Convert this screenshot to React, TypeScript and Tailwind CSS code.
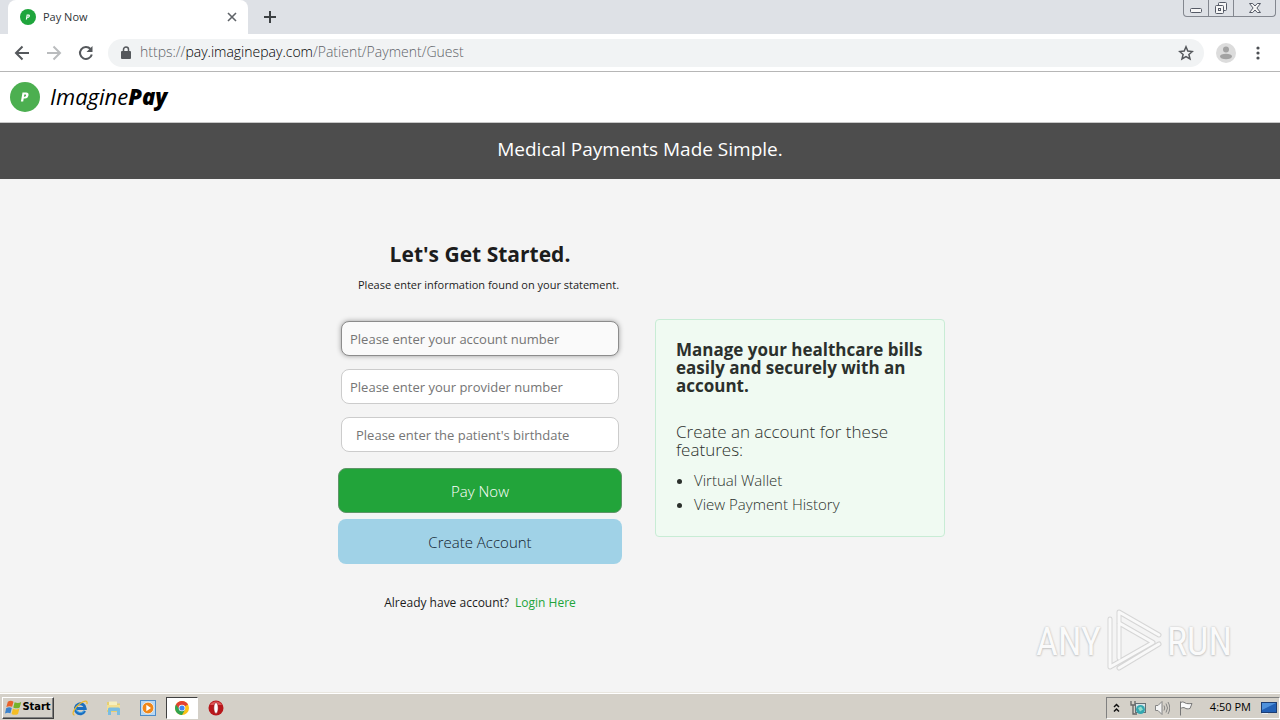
import React from "react";

const UI_FONT = "font-['Open_Sans','Noto_Sans',sans-serif]";

function PayBadge({ size, fill }: { size: number; fill: string }) {
  return (
    <svg width={size} height={size} viewBox="0 0 30 30" aria-hidden="true" className="shrink-0">
      <circle cx="15" cy="15" r="15" fill={fill} />
      <path
        d="M12.500 10.500h3.600c1.900 0 2.700 1.100 2.400 2.700-.3 2-1.600 3.300-3.500 3.300h-1.300l-.5 3h-2.300z M14.300 12.400l-.4 2.300h.7c.9 0 1.300-.5 1.500-1.200.1-.7-.2-1.100-.9-1.100z"
        fill="#fff"
        fillRule="evenodd"
      />
    </svg>
  );
}

function TabStrip() {
  return (
    <div className="flex h-[34px] bg-[#dee1e6] pl-2">
      <div className="flex h-full w-60 items-center rounded-t-lg bg-white pl-3 pr-2">
        <PayBadge size={16} fill="#1fa53c" />
        <span className="ml-[7px] flex-1 text-[11px] text-[#303438]">Pay Now</span>
        <button aria-label="Close tab" className="flex h-4 w-4 items-center justify-center">
          <svg width="10" height="10" viewBox="0 0 10 10" stroke="#5f6368" strokeWidth="1.6">
            <path d="M1 1l8 8M9 1L1 9" />
          </svg>
        </button>
      </div>
      <button aria-label="New tab" className="ml-3.5 flex w-4 items-center justify-center">
        <svg width="12" height="12" viewBox="0 0 12 12" stroke="#3c4043" strokeWidth="2">
          <path d="M6 0v12M0 6h12" />
        </svg>
      </button>
      <div className="ml-auto mr-1 flex h-[17px] rounded-b border border-t-0 border-[#83878f] bg-[#dee1e6]">
        <button aria-label="Minimize" className="flex w-[25px] items-center justify-center border-r border-[#83878f]">
          <svg width="12" height="17" viewBox="0 0 12 17" fill="#f6f6f6" stroke="#555a66">
            <rect x=".5" y="8.5" width="11" height="4" rx="1" />
          </svg>
        </button>
        <button aria-label="Restore" className="flex w-[25px] items-center justify-center border-r border-[#83878f]">
          <svg width="14" height="15" viewBox="0 0 14 15" fill="#f6f6f6" stroke="#555a66">
            <rect x="4.5" y="1.5" width="8" height="8" rx="1" />
            <rect x="1.500" y="4.5" width="8" height="8" rx="1" />
            <rect x="4.500" y="7.500" width="2" height="2" />
          </svg>
        </button>
        <button aria-label="Close" className="flex w-[41px] items-center justify-center">
          <svg width="12" height="12" viewBox="0 0 12 12" fill="#f6f6f6" stroke="#555a66">
            <path d="M.5 1.500h3.200L6 4l2.300-2.500h3.200L7.900 6l3.600 4.500H8.300L6 8l-2.300 2.500H.5L4.100 6z" />
          </svg>
        </button>
      </div>
    </div>
  );
}

function Toolbar() {
  return (
    <div className="flex h-[38px] items-center border-b border-[#b6b6b6] bg-white pl-3.5 pr-3">
      <button aria-label="Back" className="flex w-4 justify-center">
        <svg width="16" height="16" viewBox="0 0 16 16" fill="none" stroke="#55585c" strokeWidth="2">
          <path d="M15 8H2M8.500 1.500L2 8l6.500 6.500" />
        </svg>
      </button>
      <button aria-label="Forward" className="ml-4 flex w-4 justify-center">
        <svg width="16" height="16" viewBox="0 0 16 16" fill="none" stroke="#babcbe" strokeWidth="2">
          <path d="M1 8h13M7.500 1.500L14 8l-6.500 6.500" />
        </svg>
      </button>
      <button aria-label="Reload" className="ml-4 flex w-4 justify-center">
        <svg width="16" height="16" viewBox="0 0 16 16" fill="none" stroke="#55585c" strokeWidth="2">
          <path d="M12.500 4A6 6 0 1 0 13.800 9.500" />
          <path d="M14.500 1v6H8.500z" fill="#55585c" stroke="none" />
        </svg>
      </button>
      <div className="ml-3.5 flex h-7 flex-1 items-center rounded-full bg-[#f1f3f4] px-3">
        <svg width="12" height="14" viewBox="0 0 12 14" className="shrink-0">
          <rect x="1" y="5" width="10" height="8" rx="1" fill="#55585c" />
          <path d="M3.500 5.500V3.500a2.500 2.500 0 0 1 5 0v2" fill="none" stroke="#55585c" strokeWidth="1.500" />
        </svg>
        <div className="ml-2 flex-1 pb-0.5 text-sm leading-5 font-light text-[#5f6368]">
          https://<span className="text-black">pay.imaginepay.com</span>/Patient/Payment/Guest
        </div>
        <button aria-label="Bookmark this page" className="-mr-0.5">
          <svg width="16" height="16" viewBox="0 0 16 16" fill="none" stroke="#55585c" strokeWidth="1.500">
            <path d="M8 1.800l1.800 4.300 4.600.4-3.500 3 1.100 4.500L8 11.600 4 14l1.100-4.500-3.500-3 4.600-.4z" />
          </svg>
        </button>
      </div>
      <button aria-label="Profile" className="ml-3">
        <svg width="20" height="20" viewBox="0 0 20 20">
          <circle cx="10" cy="10" r="10" fill="#dcdcdc" />
          <circle cx="10" cy="6.500" r="3" fill="#a2a2a2" />
          <ellipse cx="10" cy="13.500" rx="6" ry="2.700" fill="#a2a2a2" />
        </svg>
      </button>
      <button aria-label="Browser menu" className="ml-4 mr-1">
        <svg width="12" height="16" viewBox="0 0 12 16" fill="#4d5054">
          <circle cx="6" cy="3" r="1.600" />
          <circle cx="6" cy="8" r="1.600" />
          <circle cx="6" cy="13" r="1.600" />
        </svg>
      </button>
    </div>
  );
}

function SiteHeader() {
  return (
    <header>
      <div className="flex h-[51px] items-center border-b border-[#c8c8c8] bg-white pl-2.5">
        <PayBadge size={30} fill="#4caf50" />
        <a href="#home" className="ml-2.5 pb-0.5 text-[22px] leading-[30px] italic text-black">
          Imagine<span className="font-extrabold">Pay</span>
        </a>
      </div>
      <p className="bg-[#4d4d4d] pt-3 pb-4 text-center text-[19px] leading-7 text-white">
        Medical Payments Made Simple.
      </p>
    </header>
  );
}

const inputBase =
  "block h-[35px] w-full rounded-lg border text-[13px] text-[#333] outline-none placeholder:text-[#757575]";

function GuestForm() {
  return (
    <form className="px-[18px]" onSubmit={(e) => e.preventDefault()}>
      <h1 className="text-center text-[21px] leading-8 font-bold text-[#1c1c1c]">Let's Get Started.</h1>
      <p className="mt-[5px] pl-5 text-[11px] leading-5 whitespace-nowrap text-[#1c1c1c]">
        Please enter information found on your statement.
      </p>
      <div className="mt-[26px] flex flex-col gap-[13px] px-[3px]">
        <input
          aria-label="Account number"
          placeholder="Please enter your account number"
          className={inputBase + " border-[#8c8c8c] bg-[#fafafa] px-2 shadow-[0_0_5px_#999]"}
        />
        <input
          aria-label="Provider number"
          placeholder="Please enter your provider number"
          className={inputBase + " border-[#ccc] bg-white px-2"}
        />
        <input
          aria-label="Patient's birthdate"
          placeholder="Please enter the patient's birthdate"
          className={inputBase + " border-[#ccc] bg-white px-3.5"}
        />
      </div>
      <button className="mt-4 block h-[45px] w-full rounded-lg border border-[#5f9468] bg-[#22a43a] pt-0.5 text-[15px] font-light text-white">
        Pay Now
      </button>
      <button
        type="button"
        className="mt-1.5 block h-[45px] w-full rounded-lg bg-[#a0d2e7] pt-0.5 text-[15px] font-light text-[#10202c]"
      >
        Create Account
      </button>
      <p className="mt-[29px] text-center text-xs leading-5 text-[#1c1c1c]">
        Already have account?
        <a href="#login" className="ml-1.5 text-[#22a43a]">
          Login Here
        </a>
      </p>
    </form>
  );
}

function AccountPanel() {
  return (
    <aside className="mx-[15px] mt-[81px] self-start rounded-sm border border-[#c8ecd5] bg-[#f0faf2] px-5 pt-[21px] pb-5 text-[#2b302c]">
      <h2 className="text-[17px] leading-[18px] font-bold">
        Manage your healthcare bills easily and securely with an account.
      </h2>
      <h3 className="mt-7 text-[17px] leading-[18px] font-light">Create an account for these features:</h3>
      <ul className="mt-[9px] list-disc pl-[18px] text-[15px] leading-6 font-light">
        <li>Virtual Wallet</li>
        <li>View Payment History</li>
      </ul>
    </aside>
  );
}

function Watermark() {
  return (
    <div
      aria-hidden="true"
      className="absolute right-12 bottom-5 flex items-center gap-1 font-['Liberation_Sans_Narrow','Roboto_Condensed','Liberation_Sans',sans-serif] text-[38px] leading-none text-[#fafafa] [text-shadow:0_0_2px_#bbb,0_1px_2px_#ccc]"
    >
      <span className="pt-1">ANY</span>
      <svg width="58" height="64" viewBox="0 0 58 64" fill="none" strokeLinejoin="round" strokeLinecap="round">
        <g stroke="#d6d6d6" strokeWidth="5">
          <path d="M14 50V4l40 23M14 15l34 19.500L5 59V11M14 60l40-24" />
        </g>
        <g stroke="#f9f9f9" strokeWidth="3">
          <path d="M14 50V4l40 23M14 15l34 19.500L5 59V11M14 60l40-24" />
        </g>
      </svg>
      <span className="pt-1">RUN</span>
    </div>
  );
}

function WindowsFlag() {
  return (
    <svg width="17" height="16" viewBox="0 0 15 14">
      <path d="M2.500 1.500C4.500.3 6 .6 7.500 1.400L6.300 6C4.700 5.200 3 5.200 1.200 6.200z" fill="#e8622c" />
      <path d="M8.500 1.900c2 1 3.800.9 5.800-.1L13 6.500c-2 1-3.800 1-5.700 0z" fill="#74b32c" />
      <path d="M1 7.200c1.800-1 3.500-1 5-.2l-1.200 4.700c-1.600-.9-3.200-.8-4.800.2z" fill="#3b82cd" />
      <path d="M7 7.500c1.900 1 3.700 1 5.700 0l-1.200 4.700c-2 1-3.800 1-5.700 0z" fill="#f5bd24" />
    </svg>
  );
}

function Taskbar() {
  const slot = "flex h-[22px] w-8 items-center justify-center";
  return (
    <footer className="flex h-7 items-center border-t border-[#e9e6df] bg-[#d4d0c8] pt-0.5 pl-0.5 shadow-[inset_0_1px_0_#fff]">
      <button className="flex h-[22px] w-[52px] items-center justify-center border border-t-white border-r-[#404040] border-b-[#404040] border-l-white font-['DejaVu_Sans_Condensed','Open_Sans',sans-serif] text-[11px] font-bold text-black shadow-[inset_-1px_-1px_0_#808080]">
        <WindowsFlag />
        Start
      </button>
      <nav className="ml-2.5 flex items-center gap-0.5">
        <button aria-label="Internet Explorer" className={slot}>
          <svg width="16" height="16" viewBox="0 0 16 16" fill="none">
            <path d="M12.800 11A5 5 0 1 1 13.300 8.500H4" stroke="#1b6fc0" strokeWidth="2.800" />
            <path d="M12.500 10.500A5 5 0 0 1 3.500 8" stroke="#47a9e8" strokeWidth="1" />
            <path d="M2.500 15C-1.500 14.500 3.500 6.500 8.500 3.200 13.500 0 16 .8 14.800 4" stroke="#edb92e" strokeWidth="1.300" />
          </svg>
        </button>
        <button aria-label="Explorer" className={slot}>
          <svg width="16" height="16" viewBox="0 0 16 16">
            <path d="M1 2h5l1 1.500h7V12H1z" fill="#e6cf72" />
            <path d="M3 1.500h8V5H3z" fill="#f6efbd" />
            <path d="M1 5h13v5H1z" fill="#f3df91" />
            <path d="M2 9q0-1.500 1.500-1.500h9Q14 7.500 14 9v6h-3v-4H5v4H2z" fill="#79bde2" />
          </svg>
        </button>
        <button aria-label="Media Player" className={slot}>
          <svg width="16" height="16" viewBox="0 0 16 16">
            <rect x=".5" y=".5" width="15" height="15" fill="#b9d8f2" stroke="#4c8cca" />
            <circle cx="8" cy="8" r="5.800" fill="#f08719" stroke="#fff" strokeWidth=".6" />
            <path d="M6.300 4.800v6.400L11 8z" fill="#fff" />
          </svg>
        </button>
        <button
          aria-label="Chrome"
          className="flex h-[22px] w-8 items-center justify-center border border-t-[#404040] border-r-white border-b-white border-l-[#404040] bg-white"
        >
          <svg width="14" height="14" viewBox="0 0 14 14">
            <circle cx="7" cy="7" r="7" fill="#fbc116" />
            <path d="M7 7L.94 3.500A7 7 0 0 0 7 14l3-5.300z" fill="#31a350" />
            <path d="M7 7H3.500L.94 3.500A7 7 0 0 1 13.060 3.500z" fill="#e24033" />
            <circle cx="7" cy="7" r="3.300" fill="#fff" />
            <circle cx="7" cy="7" r="2.600" fill="#4285f4" />
          </svg>
        </button>
        <button aria-label="Opera" className={slot}>
          <svg width="16" height="16" viewBox="0 0 16 16">
            <circle cx="8" cy="8" r="7.500" fill="#b8171b" />
            <path d="M2 5a7 7 0 0 1 12 0z" fill="#df5656" />
            <ellipse cx="8" cy="8" rx="2.200" ry="5.500" fill="#fff" stroke="#8e0e12" strokeWidth=".6" />
          </svg>
        </button>
      </nav>
      <div className="ml-auto flex h-[22px] items-center border border-t-[#808080] border-r-white border-b-white border-l-[#808080] pr-0.5 pl-1.5">
        <svg width="7" height="10" viewBox="0 0 7 10" fill="none" stroke="#111" strokeWidth="1.500">
          <path d="M1 4l2.500-2.500L6 4M1 8.500L3.500 6 6 8.500" />
        </svg>
        <svg width="16" height="16" viewBox="0 0 16 16" className="ml-2.5">
          <path d="M1 1v4h4V1M3 5v9h4" fill="none" stroke="#666" strokeWidth="1.300" />
          <rect x="5.500" y="3.500" width="10" height="9" fill="#d8e4e8" stroke="#656f74" />
          <circle cx="10.500" cy="9.500" r="4.500" fill="#35a7b0" />
          <path d="M8 8l3-1.500 2 3-3 2z" fill="#91dccb" />
        </svg>
        <svg width="16" height="16" viewBox="0 0 16 16" fill="none" stroke="#858585" className="ml-2">
          <path d="M1.500 5.500v5H4l4 4v-13l-4 4z" fill="#f4f4f4" />
          <path d="M10 5.500q1.500 2.500 0 5M12 3.500q3 4.500 0 9M14 2q3.500 6 0 12" />
        </svg>
        <svg width="16" height="16" viewBox="0 0 16 16" fill="#fafafa" stroke="#777" className="ml-2">
          <path d="M2.500 15.500v-14M2.500 2.500c3-1.500 4 .5 6 1 1.500.5 3.500 0 5.500 0l-2 5c-2 .5-4 .5-5-.500-1-.7-3-.5-4.500.5z" />
        </svg>
        <span className="ml-4 text-[11px] text-black">4:50 PM</span>
        <svg width="16" height="14" viewBox="0 0 16 14" className="ml-2.5">
          <rect x=".5" y="1.500" width="15" height="10" fill="#2260b5" stroke="#1c3d73" />
          <path d="M1 2h14L1 9z" fill="#4f91db" />
          <path d="M1 12.500h6" stroke="#e8eef5" />
        </svg>
      </div>
    </footer>
  );
}

export default function App() {
  return (
    <div className={"flex min-h-screen flex-col bg-[#f4f4f4] " + UI_FONT}>
      <TabStrip />
      <Toolbar />
      <SiteHeader />
      <main className="relative flex-1 pt-[59px] pb-8">
        <div className="mx-auto grid max-w-[640px] grid-cols-2">
          <GuestForm />
          <AccountPanel />
        </div>
        <Watermark />
      </main>
      <Taskbar />
    </div>
  );
}
